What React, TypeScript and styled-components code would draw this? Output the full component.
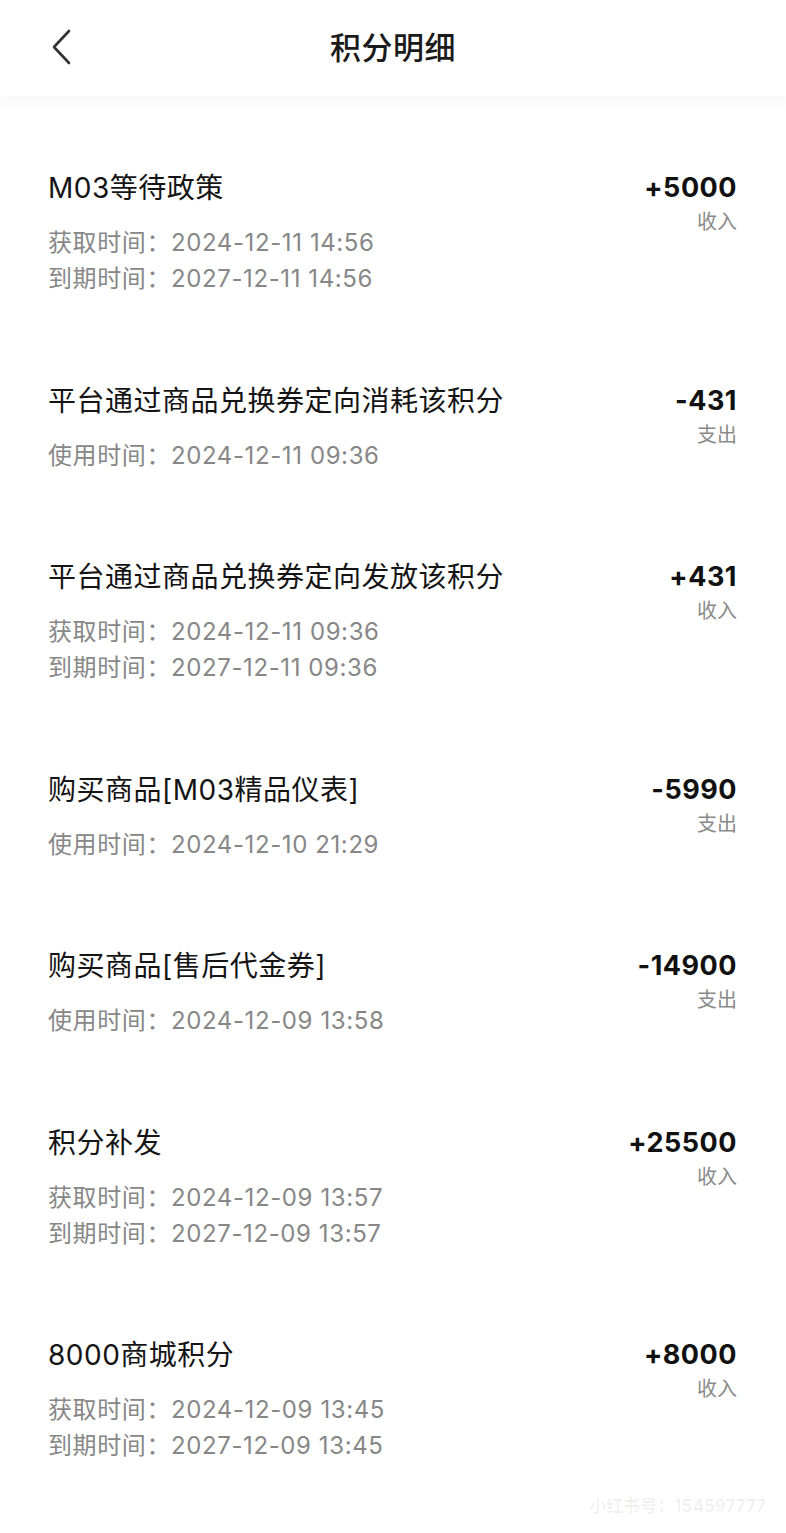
import styled, { createGlobalStyle } from "styled-components";

type Record = {
  title: string;
  amount: string;
  kind: "收入" | "支出";
  lines: string[];
};

const RECORDS: Record[] = [
  {
    title: "M03等待政策",
    amount: "+5000",
    kind: "收入",
    lines: ["获取时间：2024-12-11 14:56", "到期时间：2027-12-11 14:56"],
  },
  {
    title: "平台通过商品兑换券定向消耗该积分",
    amount: "-431",
    kind: "支出",
    lines: ["使用时间：2024-12-11 09:36"],
  },
  {
    title: "平台通过商品兑换券定向发放该积分",
    amount: "+431",
    kind: "收入",
    lines: ["获取时间：2024-12-11 09:36", "到期时间：2027-12-11 09:36"],
  },
  {
    title: "购买商品[M03精品仪表]",
    amount: "-5990",
    kind: "支出",
    lines: ["使用时间：2024-12-10 21:29"],
  },
  {
    title: "购买商品[售后代金券]",
    amount: "-14900",
    kind: "支出",
    lines: ["使用时间：2024-12-09 13:58"],
  },
  {
    title: "积分补发",
    amount: "+25500",
    kind: "收入",
    lines: ["获取时间：2024-12-09 13:57", "到期时间：2027-12-09 13:57"],
  },
  {
    title: "8000商城积分",
    amount: "+8000",
    kind: "收入",
    lines: ["获取时间：2024-12-09 13:45", "到期时间：2027-12-09 13:45"],
  },
];

export default function App() {
  return (
    <>
      <GlobalStyle />
      <StyledPage>
        <StyledHeader>
          <StyledBackButton aria-label="返回">
            <svg width="22" height="36" viewBox="0 0 22 36" fill="none">
              <path
                d="M19 2 L4 18 L19 34"
                stroke="#333"
                strokeWidth="2.6"
                strokeLinecap="round"
                strokeLinejoin="round"
              />
            </svg>
          </StyledBackButton>
          <StyledTitle>积分明细</StyledTitle>
        </StyledHeader>

        <StyledList>
          {RECORDS.map((r, i) => (
            <StyledItem key={i}>
              <StyledInfo>
                <StyledItemTitle>{r.title}</StyledItemTitle>
                <StyledTimes>
                  {r.lines.map((line) => (
                    <StyledTime key={line}>{line}</StyledTime>
                  ))}
                </StyledTimes>
              </StyledInfo>
              <StyledAmountBox>
                <StyledAmount>{r.amount}</StyledAmount>
                <StyledKind>{r.kind}</StyledKind>
              </StyledAmountBox>
            </StyledItem>
          ))}
        </StyledList>

        <StyledWatermark>小红书号：154597777</StyledWatermark>
      </StyledPage>
    </>
  );
}

const GlobalStyle = createGlobalStyle`
  body {
    margin: 0;
    background: #ffffff;
    font-family: Inter, "Noto Sans CJK SC", sans-serif;
  }
`;

const StyledPage = styled.div`
  position: relative;
  width: 786px;
  min-height: 1533px;
  overflow: hidden;
  background: #ffffff;
`;

const StyledHeader = styled.header`
  position: relative;
  height: 96px;
  box-sizing: border-box;
  padding-bottom: 6px;
  display: flex;
  align-items: center;
  justify-content: center;
  background: #ffffff;
  box-shadow: 0 6px 12px rgba(0, 0, 0, 0.035);
`;

const StyledBackButton = styled.button`
  position: absolute;
  left: 50px;
  top: 29px;
  padding: 0;
  border: none;
  background: transparent;
  display: flex;
`;

const StyledTitle = styled.h1`
  margin: 0;
  font-size: 31px;
  font-weight: 500;
  color: #1a1a1a;
  letter-spacing: 0.5px;
`;

const StyledList = styled.div`
  padding-top: 31px;
  display: flex;
  flex-direction: column;
`;

const StyledItem = styled.div`
  display: flex;
  justify-content: space-between;
  align-items: flex-start;
  padding: 43px 49px 42.5px 48px;
`;

const StyledInfo = styled.div`
  display: flex;
  flex-direction: column;
  gap: 19px;
`;

const StyledItemTitle = styled.div`
  font-size: 28px;
  line-height: 36px;
  color: #141414;
  letter-spacing: 0.5px;
`;

const StyledTimes = styled.div`
  display: flex;
  flex-direction: column;
`;

const StyledTime = styled.div`
  font-size: 24px;
  line-height: 36px;
  color: #878787;
  letter-spacing: 0.6px;
`;

const StyledAmountBox = styled.div`
  display: flex;
  flex-direction: column;
  align-items: flex-end;
`;

const StyledAmount = styled.div`
  font-size: 27px;
  line-height: 36px;
  font-weight: 700;
  color: #111111;
  letter-spacing: 0.5px;
`;

const StyledKind = styled.div`
  font-size: 20px;
  line-height: 32px;
  color: #8a8a8a;
`;

const StyledWatermark = styled.div`
  position: absolute;
  right: 20px;
  bottom: 16px;
  font-size: 17px;
  font-weight: 700;
  color: rgba(0, 0, 0, 0.06);
`;
